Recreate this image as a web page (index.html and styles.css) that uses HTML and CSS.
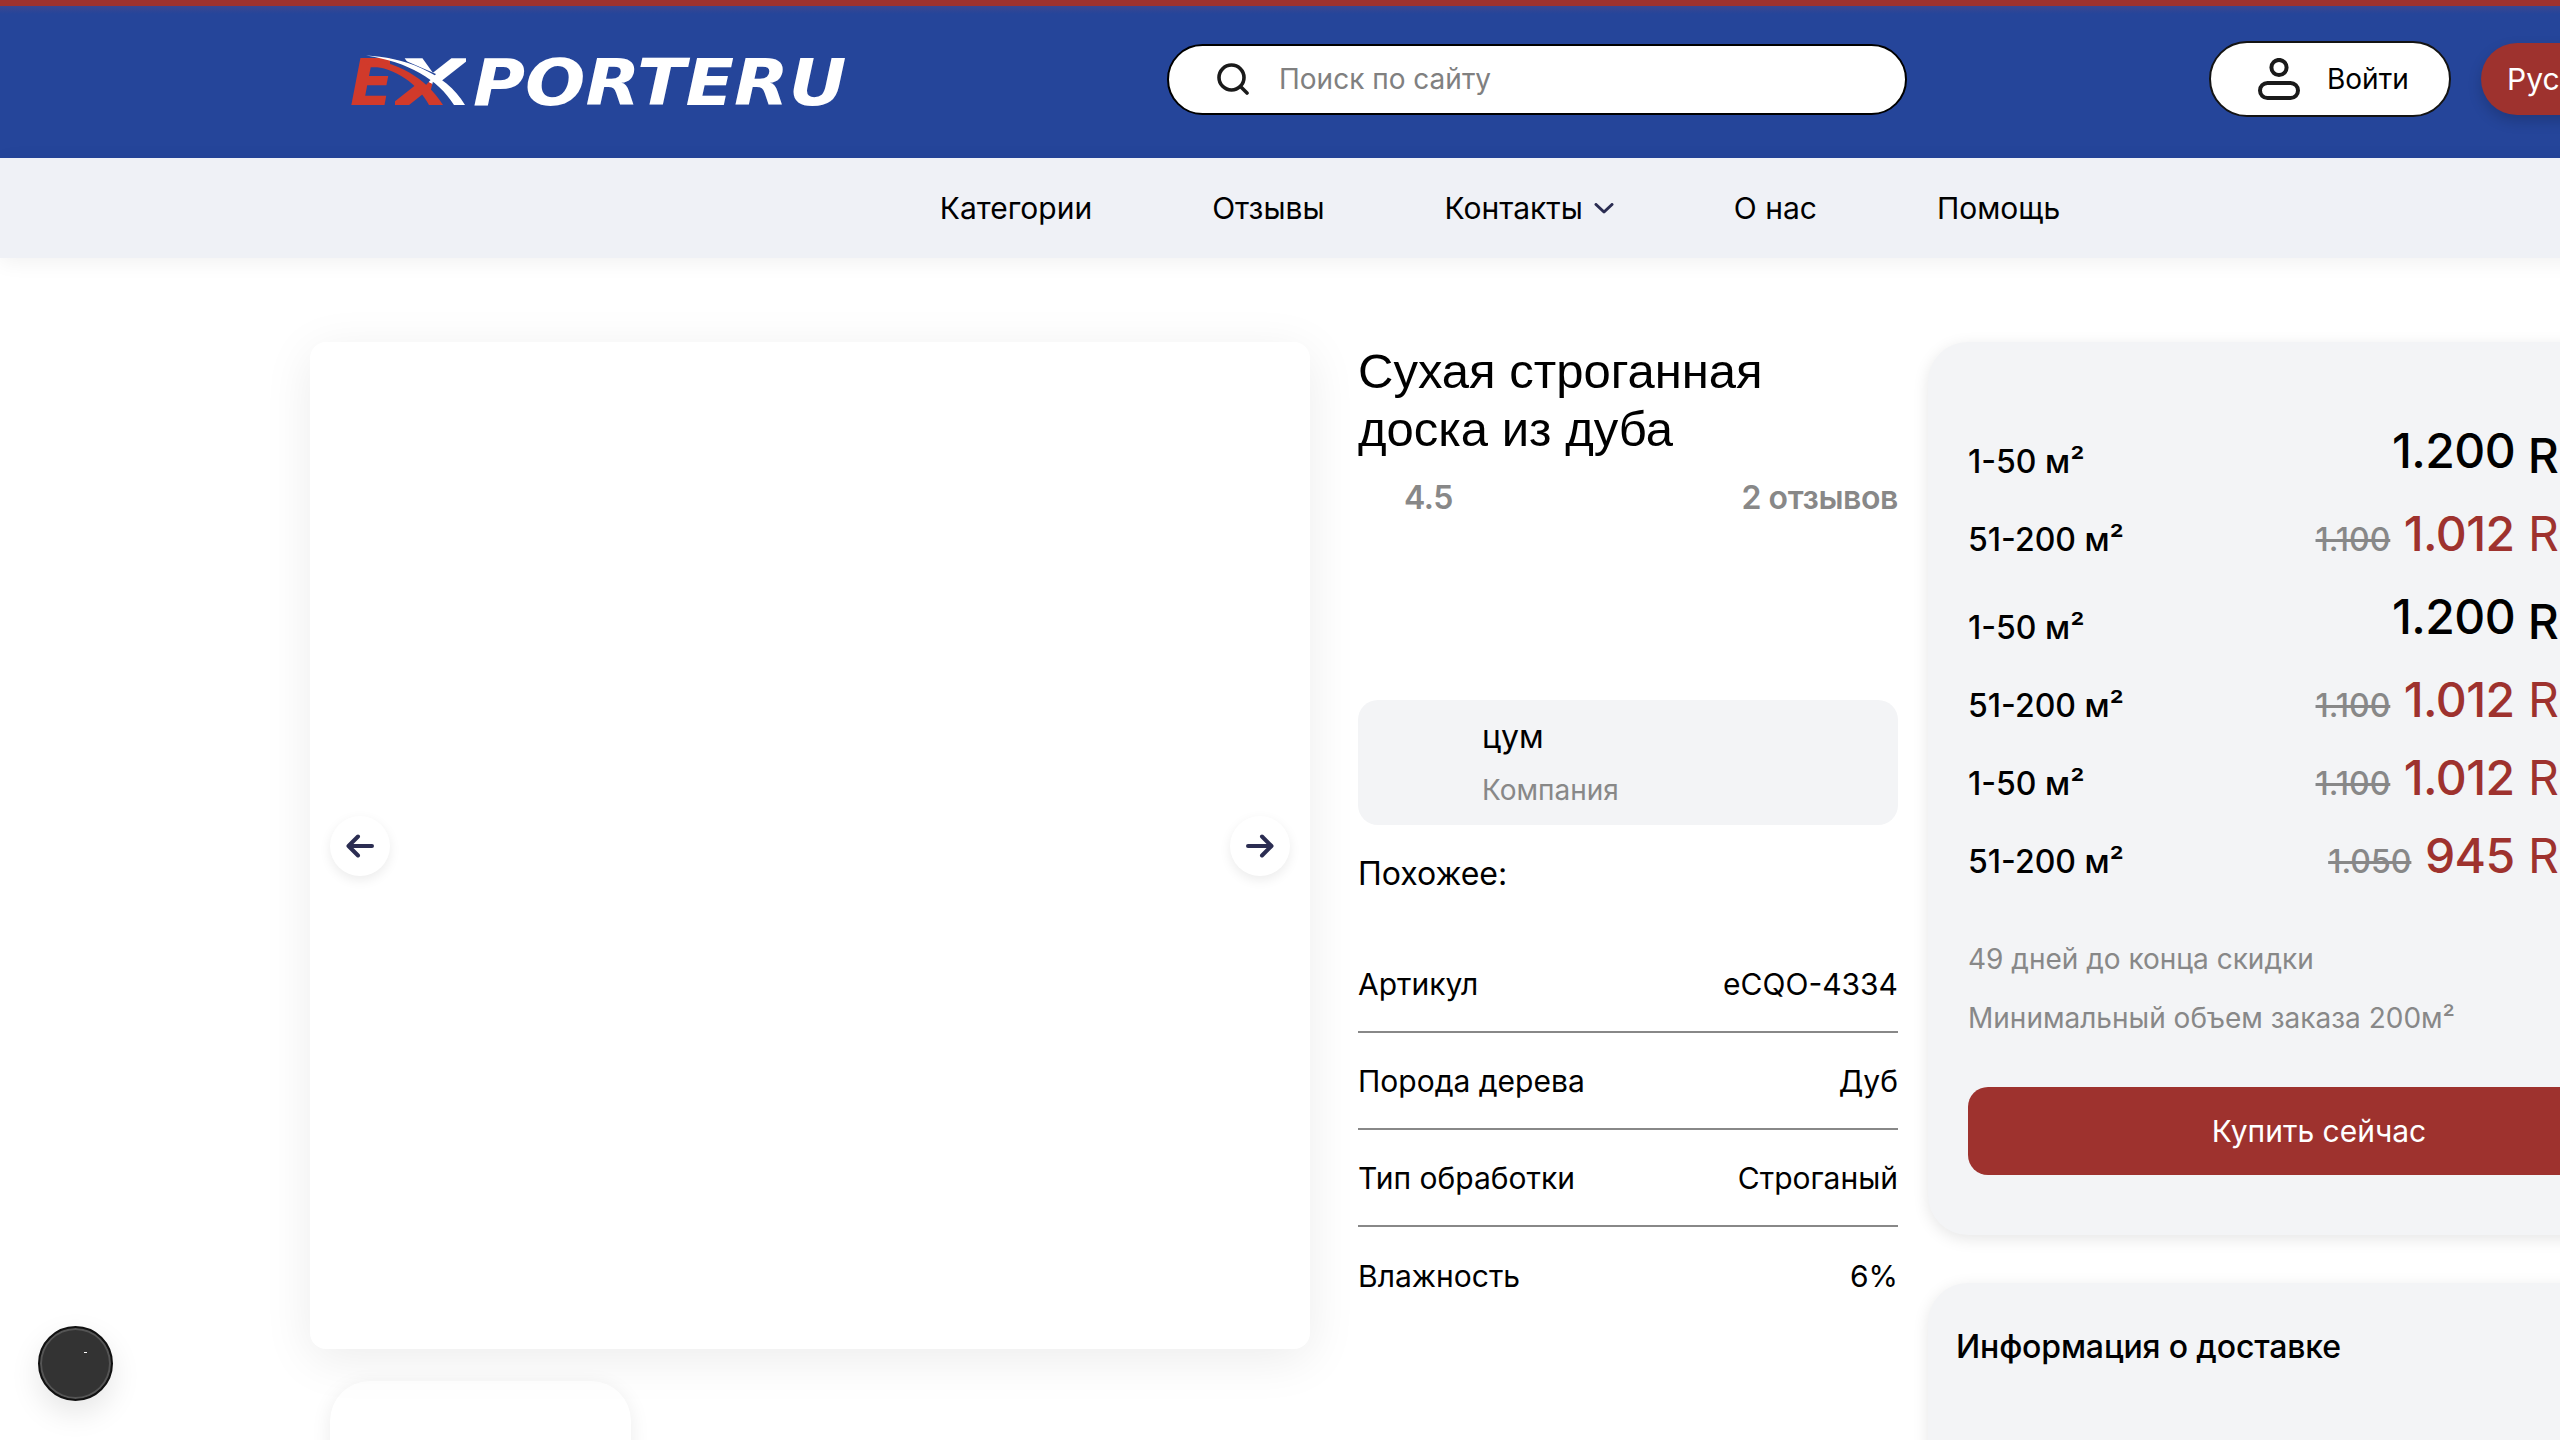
FILE: index.html
```html
<!DOCTYPE html>
<html lang="ru">
<head>
<meta charset="utf-8">
<title>Exporteru</title>
<link rel="stylesheet" href="styles.css">
</head>
<body>
<div class="page">
  <header class="topbar">
    <a class="logo">
      <span class="logo-e">E</span><span class="logo-x"><span class="logo-x-glyph">X</span></span><span class="logo-rest">PORTERU</span>
      <svg class="logo-swoosh" width="125" height="56" viewBox="0 0 125 56" aria-hidden="true">
        <polygon points="40,0 86,20 76,31 40,20" fill="#25459a"/>
        <polygon points="84,23 124,56 76,56" fill="#25459a"/>
        <path d="M12 5 C46 6 76 24 93 51 L79 51 C68 30 46 14 20 12 Z" fill="#d13a2b"/>
        <path d="M16 1.5 C52 3 96 18 115 51 L104 51 C88 25 58 8 16 1.5 Z" fill="#fff"/>
      </svg>
    </a>
    <label class="search">
      <svg class="search-icon" width="34" height="32" viewBox="0 0 34 32" aria-hidden="true">
        <circle cx="15.5" cy="14.5" r="12.5" fill="none" stroke="#1a1a1a" stroke-width="3.6"/>
        <path d="M24.5 23.5 L31 30" fill="none" stroke="#1a1a1a" stroke-width="3.6" stroke-linecap="round"/>
      </svg>
      <span class="search-text">Поиск по сайту</span>
    </label>
    <button class="login">
      <svg width="42" height="42" viewBox="0 0 42 42" aria-hidden="true">
        <circle cx="21" cy="9.5" r="7.6" fill="none" stroke="#1a1a1a" stroke-width="4"/>
        <rect x="2" y="25" width="38" height="15" rx="7.5" fill="none" stroke="#1a1a1a" stroke-width="4"/>
      </svg>
      <span>Войти</span>
    </button>
    <button class="lang">Русский</button>
  </header>

  <nav class="menu">
    <a>Категории</a>
    <a>Отзывы</a>
    <a class="menu-drop">Контакты
      <svg width="20" height="11" viewBox="0 0 20 11" aria-hidden="true"><path d="M2 1.5 L10 9 L18 1.5" fill="none" stroke="#2b2d52" stroke-width="3" stroke-linecap="round" stroke-linejoin="round"/></svg>
    </a>
    <a>О нас</a>
    <a>Помощь</a>
  </nav>

  <main class="product">
    <section class="gallery">
      <div class="main-image">
        <button class="arrow arrow-left">
          <svg width="28" height="24" viewBox="0 0 28 24" aria-hidden="true"><path d="M26 12 H3 M12 2.5 L2.5 12 L12 21.5" fill="none" stroke="#2b2d52" stroke-width="4" stroke-linecap="round" stroke-linejoin="round"/></svg>
        </button>
        <button class="arrow arrow-right">
          <svg width="28" height="24" viewBox="0 0 28 24" aria-hidden="true"><path d="M2 12 H25 M16 2.5 L25.5 12 L16 21.5" fill="none" stroke="#2b2d52" stroke-width="4" stroke-linecap="round" stroke-linejoin="round"/></svg>
        </button>
      </div>
      <div class="thumbs"><div class="thumb"></div></div>
    </section>

    <section class="details">
      <h1 class="title">Сухая строганная доска из дуба</h1>
      <div class="rating"><span class="score">4.5</span><span>2 отзывов</span></div>
      <div class="company">
        <div class="company-name">цум</div>
        <div class="company-type">Компания</div>
      </div>
      <div class="similar">Похожее:</div>
      <dl class="specs">
        <div class="spec"><dt>Артикул</dt><dd>eCQO-4334</dd></div>
        <div class="spec"><dt>Порода дерева</dt><dd>Дуб</dd></div>
        <div class="spec"><dt>Тип обработки</dt><dd>Строганый</dd></div>
        <div class="spec"><dt>Влажность</dt><dd>6%</dd></div>
      </dl>
    </section>

    <aside class="side">
      <div class="panel buy">
        <div class="price-row plain"><span class="qty">1-50 м²</span><span class="price"><span class="amount raised">1.200</span> RUB</span></div>
        <div class="price-row"><span class="qty">51-200 м²</span><span class="price sale"><s class="old">1.100</s> <span class="amount">1.012</span> RUB</span></div>
        <div class="price-row plain"><span class="qty">1-50 м²</span><span class="price"><span class="amount raised">1.200</span> RUB</span></div>
        <div class="price-row"><span class="qty">51-200 м²</span><span class="price sale"><s class="old">1.100</s> <span class="amount">1.012</span> RUB</span></div>
        <div class="price-row"><span class="qty">1-50 м²</span><span class="price sale"><s class="old">1.100</s> <span class="amount">1.012</span> RUB</span></div>
        <div class="price-row"><span class="qty">51-200 м²</span><span class="price sale"><s class="old">1.050</s> <span class="amount">945</span> RUB</span></div>
        <p class="note note-first">49 дней до конца скидки</p>
        <p class="note">Минимальный объем заказа 200м²</p>
        <button class="buy-btn">Купить сейчас</button>
      </div>
      <div class="panel delivery">
        <h2>Информация о доставке</h2>
      </div>
    </aside>
  </main>
</div>
<button class="chat"><span class="chat-dot"></span></button>
</body>
</html>
```

FILE: styles.css
```css
* { box-sizing: border-box; }
html, body { margin: 0; height: 1440px; overflow: hidden; background: #fff; }
body { font-family: Inter, "Noto Sans", sans-serif; color: #000; font-size: 28px; }
button { font-family: inherit; cursor: pointer; }
p, h1, h2, dl, dd { margin: 0; }

.page { width: 3000px; }

.topbar {
  height: 158px;
  padding-left: 350px;
  display: flex;
  align-items: center;
  background: linear-gradient(#9e322e 0, #9e322e 6px, #3a4690 6px, #25459a 14px);
}
.logo { position: relative; width: 497px; height: 64px; margin-top: 8px; display: flex; align-items: center; font: italic 700 64px/64px "DejaVu Sans", sans-serif; white-space: nowrap; }
.logo-e { color: #d13a2b; width: 45px; }
.logo-x { width: 78px; }
.logo-x-glyph { display: inline-block; transform: scaleX(1.45); transform-origin: left center; background: linear-gradient(to top right, #d13a2b 0 50%, #fff 50%); -webkit-background-clip: text; background-clip: text; color: transparent; }
.logo-rest { display: inline-block; color: #fff; transform: scaleX(1.11); transform-origin: left center; }
.logo-swoosh { position: absolute; left: 0; top: 3px; }

.search { width: 740px; height: 71px; margin-left: 320px; padding-left: 47px; display: flex; align-items: center; gap: 29px; background: #fff; border: 2px solid #000; border-radius: 36px; }
.search-text { color: #808080; }

.login { width: 242px; height: 76px; margin-left: 302px; padding: 0 0 0 47px; display: flex; align-items: center; gap: 27px; background: #fff; border: 2px solid #141414; border-radius: 38px; font-size: 28px; color: #000; }
.lang { height: 72px; margin-left: 30px; padding: 0 26px; background: #9e322e; border: 0; border-radius: 36px; color: #fff; font-size: 30px; box-shadow: 0 6px 14px rgba(0,0,0,.18); }

.menu { height: 100px; display: flex; justify-content: center; align-items: center; gap: 120px; background: #eff1f6; box-shadow: 0 4px 20px rgba(0,0,0,.06); font-size: 30px; position: relative; }
.menu-drop { display: flex; align-items: center; gap: 11px; }

.product { display: grid; grid-template-columns: 1000px 540px 782px; column-gap: 48px; padding: 84px 0 0 310px; }

.main-image { position: relative; height: 1007px; background: #fff; border-radius: 16px; box-shadow: 0 10px 50px rgba(0,0,0,.08); }
.arrow { position: absolute; top: 474px; width: 60px; height: 60px; padding: 0; display: flex; align-items: center; justify-content: center; background: #fff; border: 0; border-radius: 50%; box-shadow: 0 4px 12px rgba(0,0,0,.08); }
.arrow-left { left: 20px; }
.arrow-right { right: 20px; }
.thumbs { margin-top: 32px; padding-left: 20px; }
.thumb { width: 301px; height: 300px; background: #fff; border-radius: 40px; box-shadow: 0 4px 20px rgba(0,0,0,.08); }

.title { max-width: 500px; font: 400 49px/58px "Liberation Sans", Arial, sans-serif; }
.rating { display: flex; justify-content: space-between; margin-top: 20px; padding-left: 46px; color: #888; font-size: 32px; line-height: 40px; font-weight: 600; letter-spacing: -.4px; }
.company { height: 125px; margin-top: 182px; padding: 17px 0 0 124px; background: #f3f4f6; border-radius: 20px; }
.company-name { font-size: 32px; line-height: 40px; font-weight: 400; }
.company-type { margin-top: 13px; color: #888; line-height: 40px; }
.similar { margin-top: 29px; font-size: 32px; line-height: 40px; }

.specs { margin-top: 42px; }
.spec { height: 97px; display: flex; justify-content: space-between; align-items: center; border-bottom: 2px solid #888; font-size: 30px; }
.spec:last-child { border-bottom: 0; }

.side { margin-left: -18px; width: 782px; }
.panel { background: #f3f4f6; border-radius: 40px; box-shadow: 0 4px 16px rgba(0,0,0,.1); }
.buy { height: 893px; padding: 80px 40px 0; }
.delivery { height: 400px; margin-top: 48px; padding: 42px 28px; }
.delivery h2 { font-size: 32px; line-height: 44px; font-weight: 500; letter-spacing: -.15px; }

.price-row { height: 78px; padding-right: 44px; display: flex; justify-content: space-between; align-items: baseline; line-height: 58px; }
.price-row.plain { height: 83px; margin-top: 5px; }
.price-row.plain:first-child { margin-top: 0; }
.qty { font-size: 32px; font-weight: 500; }
.price { font-size: 48px; font-weight: 500; white-space: nowrap; }
.amount { letter-spacing: -.6px; font-weight: 500; }
.raised { vertical-align: 5px; }
.sale { color: #9e322e; font-weight: 400; }
.old { color: #888; font-size: 32px; font-weight: 500; }

.note { color: #888; line-height: 40px; }
.note-first { margin-top: 34px; }
.note + .note { margin-top: 19px; }
.buy-btn { display: block; width: 100%; height: 88px; margin-top: 49px; background: #9e322e; border: 0; border-radius: 20px; color: #fff; font-size: 30px; }

.chat { position: fixed; left: 38px; top: 1326px; width: 75px; height: 75px; padding: 0; background: #333; border: 2px solid #111; border-radius: 50%; box-shadow: inset 0 0 0 2px #555, 0 12px 30px rgba(0,0,0,.1); }
.chat-dot { position: absolute; left: 44px; top: 24px; width: 3px; height: 1px; background: #fff; }
```
